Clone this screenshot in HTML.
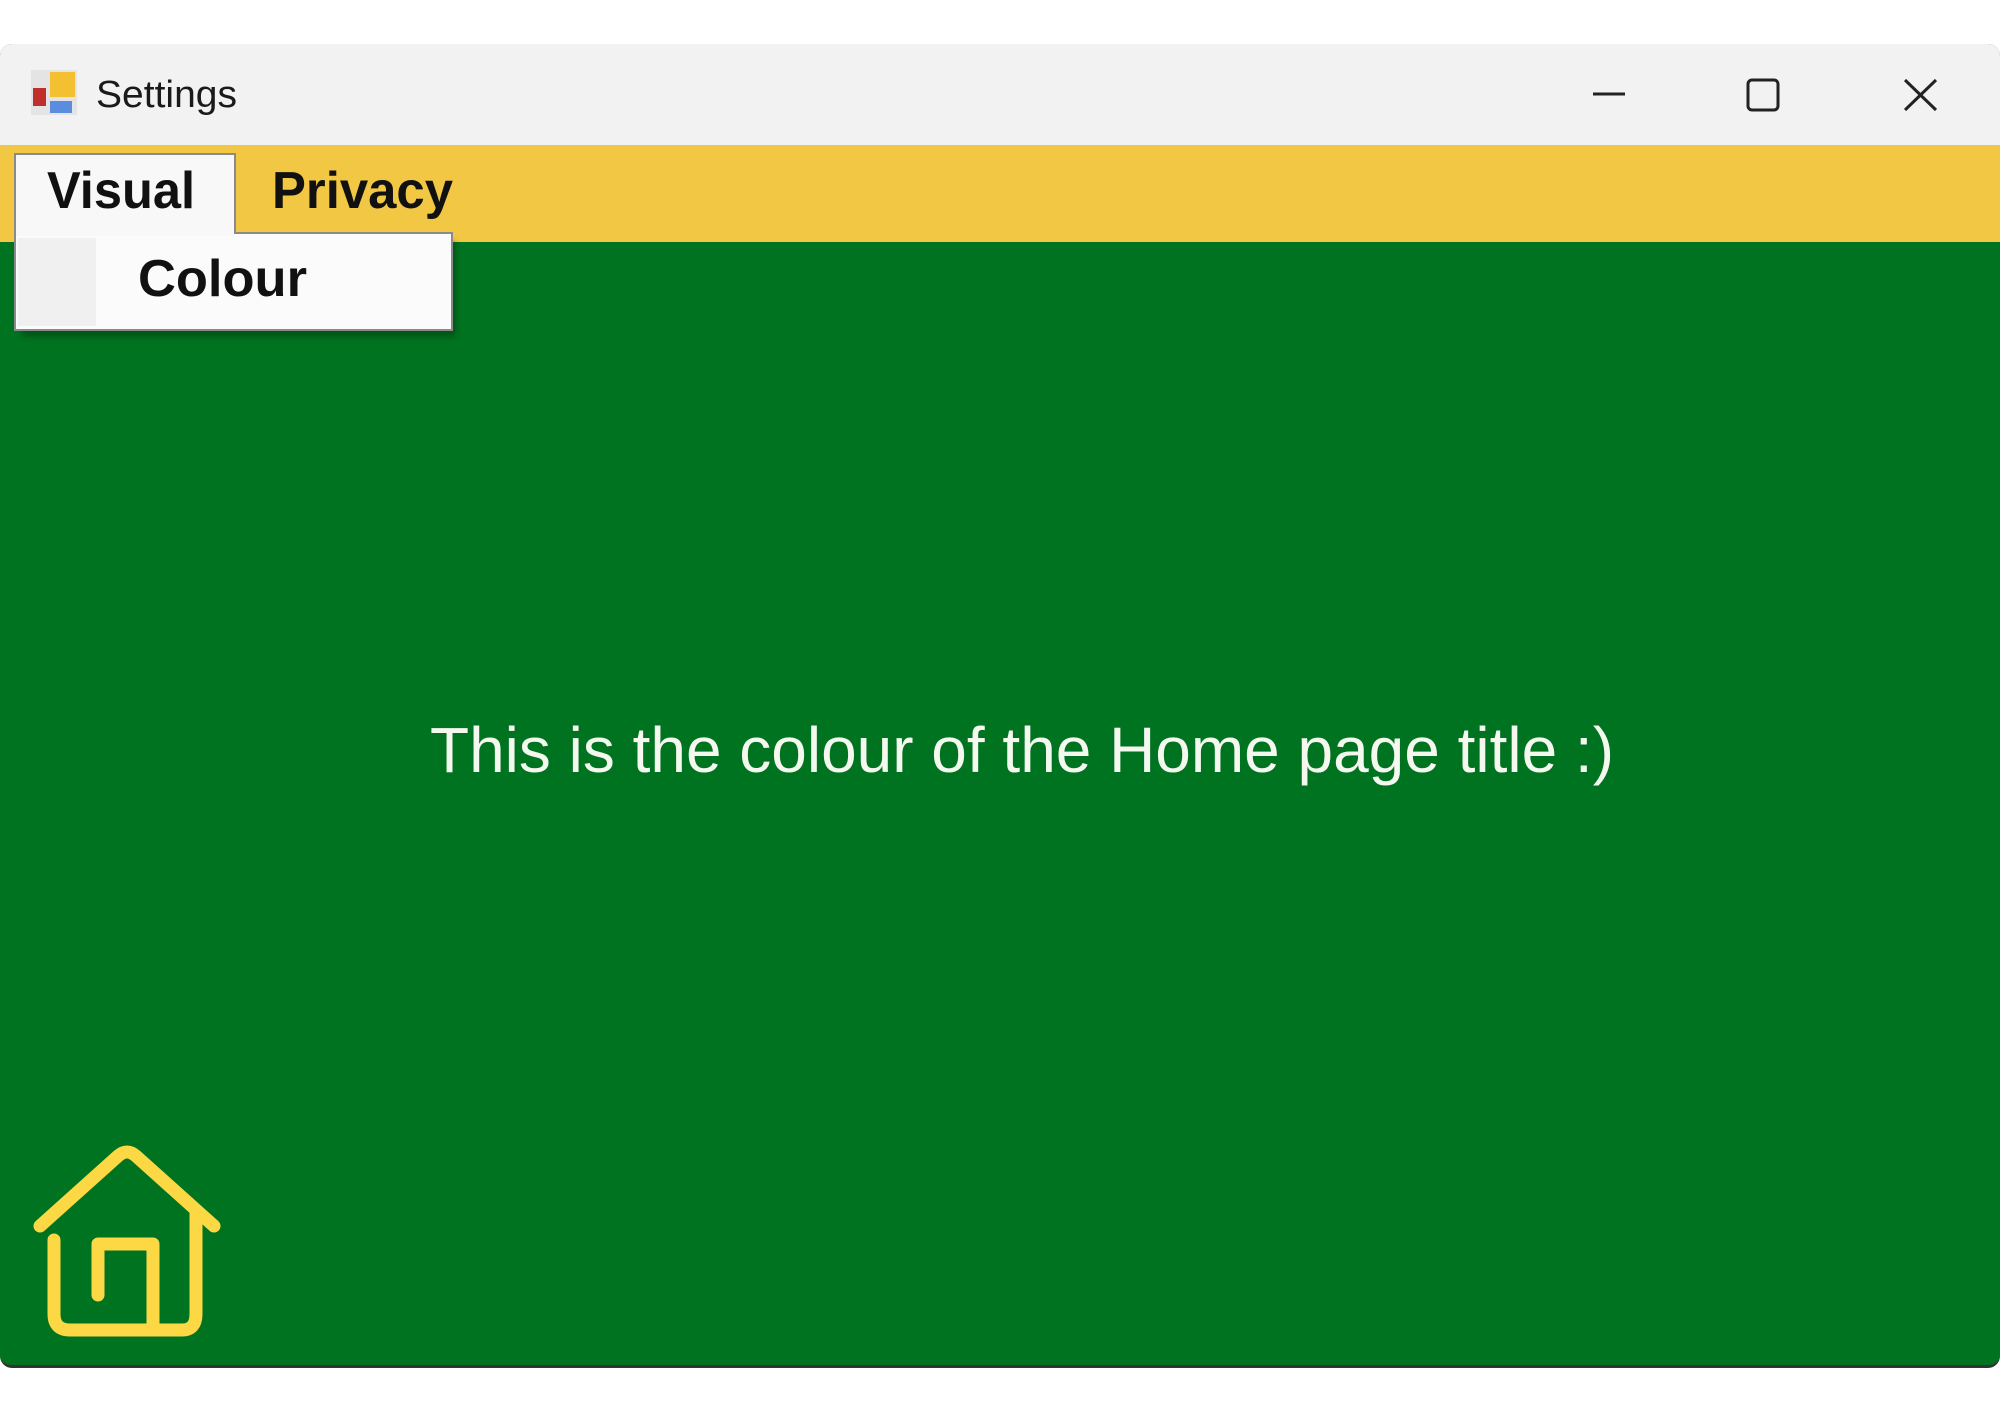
<!DOCTYPE html>
<html><head><meta charset="utf-8"><style>
html,body{margin:0;padding:0;width:2000px;height:1414px;background:#fff;overflow:hidden;position:relative;font-family:"Liberation Sans",sans-serif}
.win{position:absolute;left:0;top:44px;width:2000px;height:1324px;background:#007320;border-radius:12px;overflow:hidden;border-bottom:3px solid #333;box-sizing:border-box}
.title{position:absolute;left:0;top:0;width:2000px;height:101px;background:#f2f2f2}
.menu{position:absolute;left:0;top:101px;width:2000px;height:97px;background:#f2c744}
svg{position:absolute;left:0;top:0}
</style></head><body>
<div class="win">
<div class="title"></div>
<div class="menu"></div>
</div>
<svg width="2000" height="1414" viewBox="0 0 2000 1414">
<rect x="31" y="70" width="46" height="45" fill="#e4e4e4"/>
<rect x="50" y="72" width="25" height="25" fill="#f2c030"/>
<rect x="33" y="88" width="13" height="18" fill="#c0302a"/>
<rect x="50" y="101" width="22" height="12" fill="#5a8de0"/>
<text x="96" y="107" font-size="38" fill="#1a1a1a" textLength="141" lengthAdjust="spacingAndGlyphs">Settings</text>
<line x1="1593" y1="94" x2="1625" y2="94" stroke="#222" stroke-width="3"/>
<rect x="1748" y="80" width="30" height="30" rx="4" fill="none" stroke="#222" stroke-width="3"/>
<path d="M1905 80 L1936 110 M1936 80 L1905 110" stroke="#222" stroke-width="3"/>
<rect x="15" y="154" width="220" height="80" fill="#f8f8f8" stroke="#8a8a8a" stroke-width="2"/>
<rect x="22" y="241" width="434" height="96" fill="#000" opacity="0.25" filter="blur(3px)"/>
<rect x="15" y="233" width="437" height="97" fill="#fbfbfb" stroke="#8a8a8a" stroke-width="2"/>
<rect x="16" y="230" width="218" height="6" fill="#f8f8f8"/>
<rect x="18" y="238" width="78" height="88" fill="#f0f0f0"/>
<text x="47" y="208" font-size="52" font-weight="bold" fill="#111" textLength="148" lengthAdjust="spacingAndGlyphs">Visual</text>
<text x="272" y="208" font-size="52" font-weight="bold" fill="#111" textLength="181" lengthAdjust="spacingAndGlyphs">Privacy</text>
<text x="138" y="296" font-size="52" font-weight="bold" fill="#111" textLength="169" lengthAdjust="spacingAndGlyphs">Colour</text>
<text x="430" y="772" font-size="64" fill="#f4f8ee" textLength="1184" lengthAdjust="spacingAndGlyphs">This is the colour of the Home page title :)</text>
<g fill="none" stroke="#fcd845" stroke-width="13" stroke-linecap="round" stroke-linejoin="round">
<path d="M40 1226 L118 1156 Q127 1148 136 1156 L214 1226"/>
<path d="M54 1240 L54 1314 Q54 1330 70 1330 L182 1330 Q196 1330 196 1314 L196 1212"/>
<path d="M98 1295 L98 1244 L153 1244 L153 1330"/>
</g>
</svg>
</body></html>
